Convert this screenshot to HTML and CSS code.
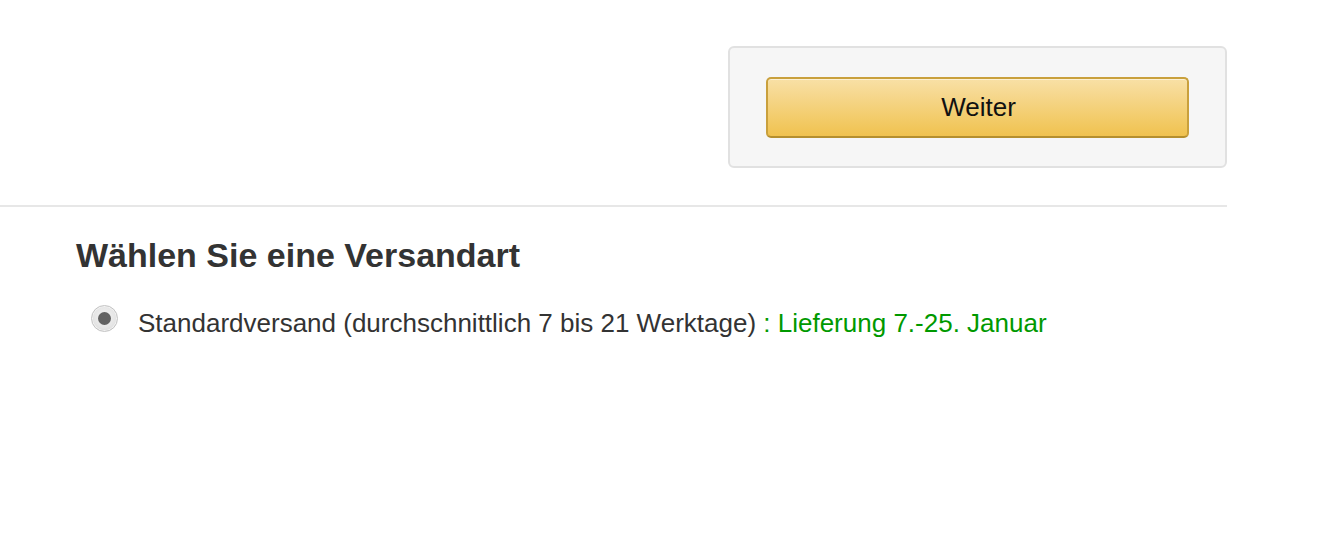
FILE: index.html
```html
<!DOCTYPE html>
<html lang="de">
<head>
<meta charset="utf-8">
<title>Versandart</title>
<link rel="stylesheet" href="styles.css">
</head>
<body>
<div class="page">
  <div class="top">
    <div class="panel">
      <button class="btn" type="button">Weiter</button>
    </div>
  </div>
  <div class="divider"></div>
  <section class="shipping">
    <h2 class="title">Wählen Sie eine Versandart</h2>
    <label class="option">
      <span class="radio"><span class="dot"></span></span>
      <span class="label">Standardversand (durchschnittlich 7 bis 21 Werktage) <span class="green">: Lieferung 7.-25. Januar</span></span>
    </label>
  </section>
</div>
</body>
</html>
```
FILE: styles.css
```css
html, body {
  margin: 0;
  padding: 0;
  background: #fff;
}
body {
  font-family: "Liberation Sans", Arial, sans-serif;
  color: #333;
}
.page {
  width: 1227px;
}
.top {
  display: flex;
  justify-content: flex-end;
  padding-top: 46px;
  padding-bottom: 37px;
}
.panel {
  box-sizing: border-box;
  width: 499px;
  height: 122px;
  background: #f6f6f6;
  border: 2px solid #e1e1e1;
  border-radius: 6px;
  display: flex;
  align-items: center;
  justify-content: center;
}
.btn {
  box-sizing: border-box;
  width: 423px;
  height: 61px;
  border: 2px solid #c9a03c;
  border-bottom-color: #b58f2e;
  border-radius: 5px;
  background: linear-gradient(to bottom, #f8e0a6, #f0c24f);
  box-shadow: inset 0 1px 0 rgba(255,255,255,0.5);
  font-family: "Liberation Sans", Arial, sans-serif;
  font-size: 26px;
  color: #111;
  cursor: pointer;
  padding: 0 0 0 2px;
}
.divider {
  height: 2px;
  background: #e7e7e7;
}
.shipping {
  padding-left: 76px;
}
.title {
  margin: 28px 0 0;
  font-size: 34px;
  font-weight: bold;
  color: #333;
  line-height: 40px;
}
.option {
  display: flex;
  align-items: center;
  margin-top: 23px;
  padding-left: 15px;
}
.radio {
  box-sizing: border-box;
  width: 27px;
  height: 27px;
  border-radius: 50%;
  border: 1px solid #c4c4c4;
  background: radial-gradient(circle at 50% 45%, #f4f4f4 0%, #e6e6e6 55%, #d2d2d2 100%);
  box-shadow: inset 0 0 0 1px #f2f2f2;
  display: flex;
  align-items: center;
  justify-content: center;
  flex: none;
}
.dot {
  width: 13px;
  height: 13px;
  border-radius: 50%;
  background: #626262;
}
.label {
  margin-left: 20px;
  font-size: 26px;
  color: #333;
  margin-top: 10px;
}
.green {
  color: #009900;
}
```
